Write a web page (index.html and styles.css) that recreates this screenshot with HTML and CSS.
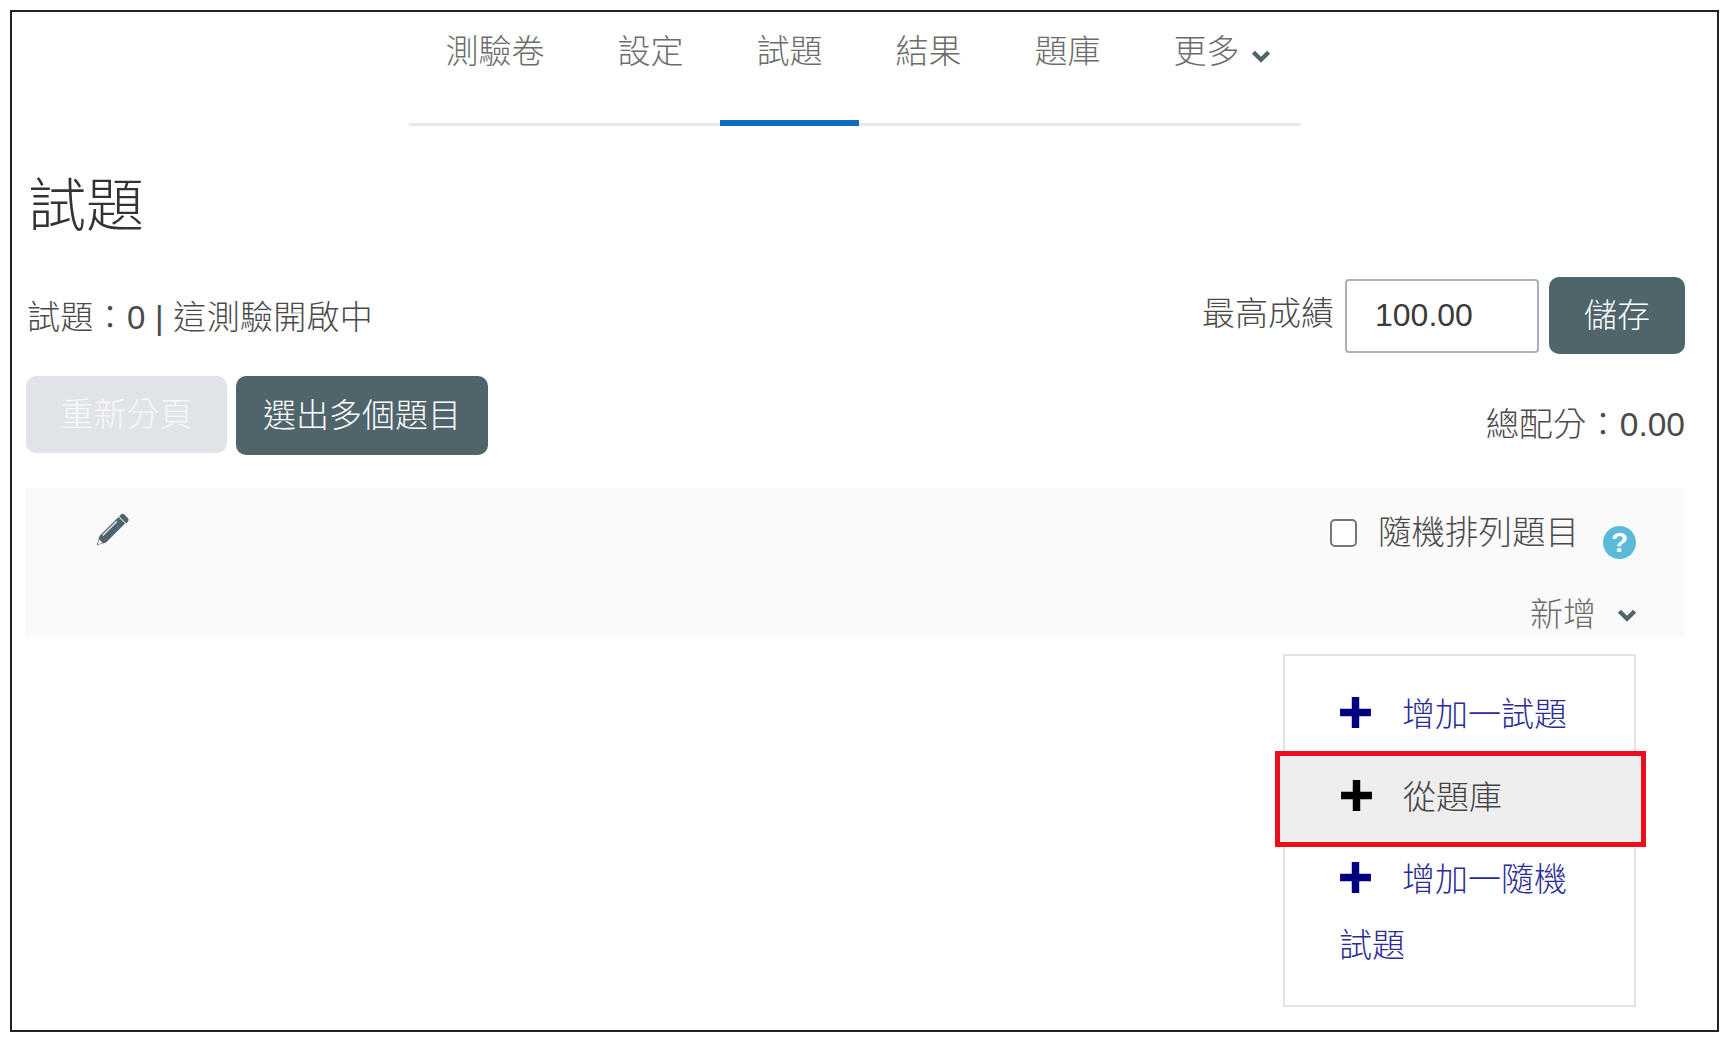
FILE: index.html
```html
<!DOCTYPE html>
<html>
<head>
<meta charset="utf-8">
<title>試題</title>
<link rel="stylesheet" href="styles.css">
</head>
<body>
<div class="frame">
	<ul class="tabs">
		<li>測驗卷</li>
		<li>設定</li>
		<li class="active">試題</li>
		<li>結果</li>
		<li>題庫</li>
		<li>更多<svg class="chev chev_nav" viewBox="0 0 18 12"><polyline points="2,2 9,9 16,2"/></svg></li>
	</ul>
	<h1 class="title">試題</h1>
	<div class="row row_grade">
		<div class="status">試題：0 | 這測驗開啟中</div>
		<div class="grade">
			<label class="grade_label">最高成績</label>
			<input class="grade_input" type="text" value="100.00">
			<button class="btn btn_save">儲存</button>
		</div>
	</div>
	<div class="row row_actions">
		<div class="btns">
			<button class="btn btn_off">重新分頁</button>
			<button class="btn btn_multi">選出多個題目</button>
		</div>
		<div class="total">總配分：0.00</div>
	</div>
	<div class="panel">
		<div class="panel_top">
			<svg class="pencil" viewBox="0 0 33 33">
				<path d="M22.5 4.5l6 6-17.5 17.5-8.5 2.500 2.500-8.500z" fill="#4f646b"/>
				<path d="M24.500 2.500a2.500 2.500 0 0 1 3.500 0l3 3a2.500 2.500 0 0 1 0 3.500l-1.500 1.500-6.500-6.500z" fill="#4f646b"/>
				<path d="M8 21.500l13-13" stroke="#dfe5e7" stroke-width="1.500"/>
				<path d="M4.500 25l3.500 3.500-4.500 1.200z" fill="#f4f4f4"/>
			</svg>
			<div class="shuffle">
				<input class="check" type="checkbox">
				<span class="shuffle_text">隨機排列題目</span>
				<span class="help">?</span>
			</div>
		</div>
		<div class="panel_add">新增<svg class="chev chev_add" viewBox="0 0 18 12"><polyline points="2,2 9,9 16,2"/></svg></div>
	</div>
	<ul class="menu">
		<li class="menu_item first"><svg class="plus" viewBox="0 0 31 31"><path d="M12 1h7v11h11v7h-11v11h-7v-11h-11v-7h11z"/></svg><span>增加一試題</span></li>
		<li class="menu_item picked"><svg class="plus" viewBox="0 0 31 31"><path d="M12 1h7v11h11v7h-11v11h-7v-11h-11v-7h11z"/></svg><span>從題庫</span></li>
		<li class="menu_item last"><svg class="plus" viewBox="0 0 31 31"><path d="M12 1h7v11h11v7h-11v11h-7v-11h-11v-7h11z"/></svg><span>增加一隨機試題</span></li>
	</ul>
</div>
</body>
</html>
```

FILE: styles.css
```css
*{margin:0;padding:0;box-sizing:border-box;}
li{list-style:none;}
body{background:#fff;font:33px/48px "Liberation Sans","Noto Sans CJK TC",sans-serif;font-weight:300;color:#4a4a4a;overflow:hidden;}
.frame{width:1709px;height:1022px;margin:10px 0 0 10px;border:2px solid #222;padding:1px 32px 0 14px;}

.tabs{display:flex;align-items:flex-start;width:892px;height:113px;margin-left:383px;border-bottom:3px solid #e6e8ea;}
.tabs li{height:113px;margin-bottom:-3px;padding:15px 36.5px 0;color:#6c6c6c;white-space:nowrap;}
.tabs .active{border-bottom:6px solid #0f6cbf;}
.chev{fill:none;stroke:#4f646b;stroke-width:4;}
.chev_nav{width:20px;height:13px;margin-left:11px;}

.title{margin-top:48px;padding-left:2px;font-size:58px;line-height:64px;font-weight:300;color:#333;}

.row{display:flex;justify-content:space-between;}
.row_grade{align-items:center;margin-top:39px;}
.status{padding:5px 0 0 1px;letter-spacing:.3px;}
.grade{display:flex;align-items:center;}
.grade_label{font-size:33px;margin:-3px 11px 0 0;}
.grade_input{width:194px;height:74px;padding-left:28px;border:2px solid #a9b1b6;border-radius:4px;font:32px "Liberation Sans",sans-serif;color:#3a3a3a;background:#fff;}
.btn{height:77px;padding-bottom:6px;border:0;border-radius:10px;font:300 33px "Liberation Sans","Noto Sans CJK TC",sans-serif;color:#fff;background:#4f646b;}
.btn_save{width:136px;margin-left:10px;}

.row_actions{margin-top:22px;}
.btns{display:flex;gap:9px;}
.btn_off{width:201px;background:#e0e4e8;color:#f6f7f9;}
.btn_multi{width:252px;height:79px;}
.total{padding-top:25px;font-size:33.5px;}

.panel{height:148px;margin-top:33px;background:#fafafa;}
.panel_top{display:flex;justify-content:space-between;height:102px;padding:24px 49px 0 68px;}
.pencil{width:36px;height:36px;}
.shuffle{display:flex;align-items:flex-start;}
.check{appearance:none;width:27px;height:28px;margin:7px 21px 0 0;border:2px solid #767676;border-radius:5px;background:#fff;}
.shuffle_text{font-size:33.5px;line-height:42px;margin-right:24px;}
.help{width:33px;height:33px;margin-top:14px;border-radius:50%;background:#5bb9d9;color:#fff;font:bold 28px/33px "Liberation Sans",sans-serif;text-align:center;}
.panel_add{display:flex;justify-content:flex-end;align-items:center;height:46px;padding:4px 48px 0 0;color:#6c6c6c;}
.chev_add{width:20px;height:13px;margin-left:21px;}

.menu{width:353px;height:353px;margin:18px 49px 0 auto;border:2px solid #e3e3e3;background:#fff;}
.menu_item{padding:2px 50px 0 54px;line-height:66px;color:#2b2b94;}
.menu_item.first{height:96px;padding-top:26px;}
.plus{width:33px;height:33px;margin-right:30px;fill:#00007f;vertical-align:-3px;}
.picked{height:96px;margin:-1px -12px -1px -10px;padding:9px 0 0 60px;border:5px solid #ea0f1c;background:#eee;color:#444;}
.picked .plus{fill:#000;}
.menu_item.last{padding-top:1px;}
```
